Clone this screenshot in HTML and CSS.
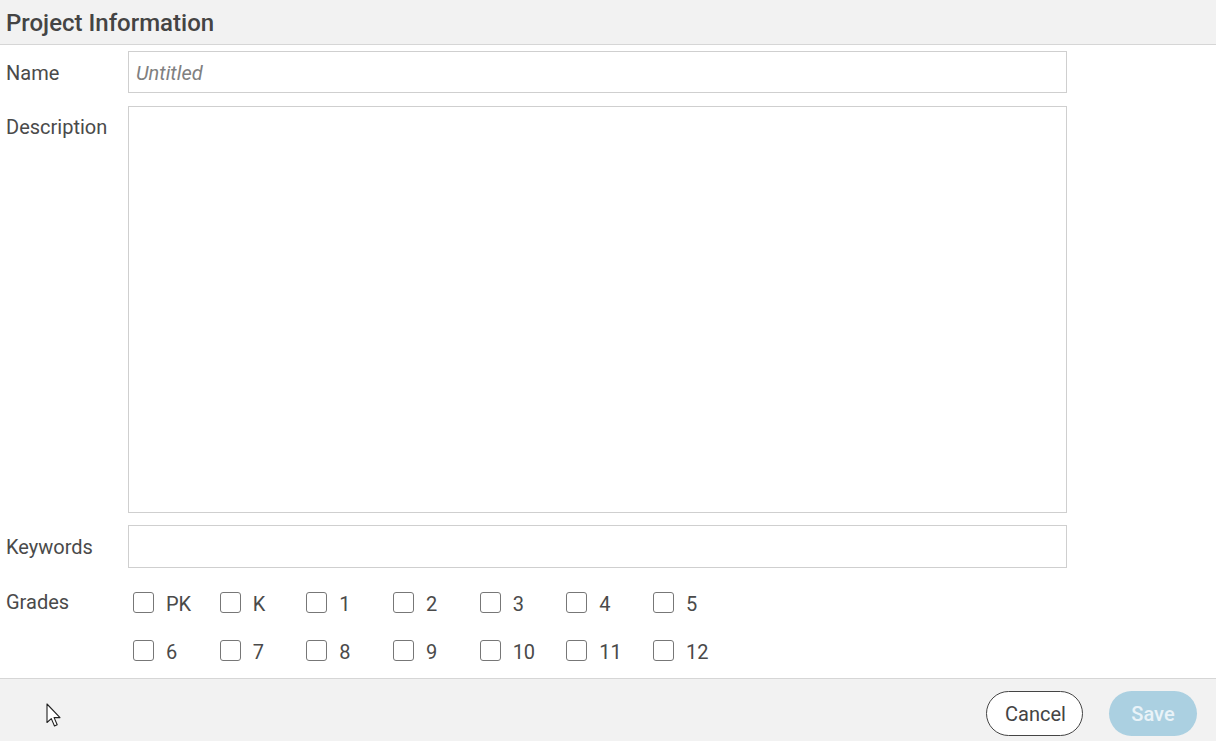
FILE: index.html
```html
<!DOCTYPE html>
<html>
<head>
<meta charset="utf-8">
<link rel="stylesheet" href="styles.css">
</head>
<body>
<div class="dialog">
  <div class="header"><h1 class="title">Project Information</h1></div>
  <div class="form">
    <div class="row row-name">
      <label class="label">Name</label>
      <input class="field" type="text" placeholder="Untitled">
    </div>
    <div class="row row-desc">
      <label class="label">Description</label>
      <textarea class="field area"></textarea>
    </div>
    <div class="row row-key">
      <label class="label">Keywords</label>
      <input class="field" type="text">
    </div>
    <div class="row row-grades">
      <label class="label label-grades">Grades</label>
      <div class="grades">
        <label class="grade"><input type="checkbox" class="cb"><span>PK</span></label>
        <label class="grade"><input type="checkbox" class="cb"><span>K</span></label>
        <label class="grade"><input type="checkbox" class="cb"><span>1</span></label>
        <label class="grade"><input type="checkbox" class="cb"><span>2</span></label>
        <label class="grade"><input type="checkbox" class="cb"><span>3</span></label>
        <label class="grade"><input type="checkbox" class="cb"><span>4</span></label>
        <label class="grade"><input type="checkbox" class="cb"><span>5</span></label>
        <label class="grade"><input type="checkbox" class="cb"><span>6</span></label>
        <label class="grade"><input type="checkbox" class="cb"><span>7</span></label>
        <label class="grade"><input type="checkbox" class="cb"><span>8</span></label>
        <label class="grade"><input type="checkbox" class="cb"><span>9</span></label>
        <label class="grade"><input type="checkbox" class="cb"><span>10</span></label>
        <label class="grade"><input type="checkbox" class="cb"><span>11</span></label>
        <label class="grade"><input type="checkbox" class="cb"><span>12</span></label>
      </div>
    </div>
  </div>
  <div class="footer">
    <button class="btn btn-cancel">Cancel</button>
    <button class="btn btn-save">Save</button>
  </div>
</div>
<svg class="cursor" width="17" height="26" viewBox="0 0 17 26">
  <path d="M1 1 L1 19.5 L5.3 15.6 L8.5 23 L11.2 21.8 L8.1 14.6 L14 14.6 Z" fill="#fff" stroke="#222" stroke-width="1.1" stroke-linejoin="round"/>
</svg>
</body>
</html>
```
FILE: styles.css
```css
* { box-sizing: border-box; }
html, body { margin: 0; padding: 0; }
body {
  font-family: Roboto, "Noto Sans", sans-serif;
  color: #4a4a4a;
  background: #fff;
  width: 1216px;
  height: 741px;
  overflow: hidden;
  position: relative;
}
.dialog {
  display: flex;
  flex-direction: column;
  height: 741px;
}
.header {
  height: 45px;
  background: #f2f2f2;
  border-bottom: 1px solid #d6d6d6;
  display: flex;
  align-items: center;
  padding-left: 6px;
}
.title {
  margin: 0;
  font-size: 24px;
  font-weight: 500;
  color: #444;
  line-height: 1;
  padding-top: 1px;
}
.form {
  flex: 1;
  padding-top: 6px;
}
.row {
  display: flex;
  align-items: flex-start;
}
.label {
  width: 128px;
  height: 42px;
  flex: none;
  padding-left: 6px;
  font-size: 20px;
  line-height: 44px;
  color: #4a4a4a;
}
.field {
  width: 939px;
  height: 42px;
  border: 1px solid #cfcfcf;
  border-radius: 0;
  font-family: Roboto, sans-serif;
  font-size: 20px;
  padding: 1px 7px 0;
  color: #4a4a4a;
  outline: none;
  margin: 0;
}
.field::placeholder {
  color: #808080;
  font-style: italic;
}
.row-desc { margin-top: 13px; }
.area {
  height: 407px;
  resize: none;
  display: block;
}
.row-desc .label { line-height: 42px; }
.row-key { margin-top: 12px; }
.row-key .field { height: 43px; }
.row-grades { margin-top: 12px; }
.label-grades { line-height: 44px; }
.grades {
  display: grid;
  grid-template-columns: repeat(7, 86.67px);
  row-gap: 4px;
  padding-left: 5px;
}
.grade {
  display: flex;
  align-items: center;
  height: 44px;
  font-size: 20px;
  color: #4a4a4a;
}
.grade span { margin-left: 12px; padding-top: 4px; }
.cb {
  appearance: none;
  -webkit-appearance: none;
  width: 21px;
  height: 21px;
  margin: 0;
  border: 1.5px solid #777;
  border-radius: 3px;
  background: #fff;
  flex: none;
}
.footer {
  height: 63px;
  background: #f2f2f2;
  border-top: 1px solid #d6d6d6;
  display: flex;
  justify-content: flex-end;
  align-items: flex-start;
  padding: 12px 19px 0 0;
  gap: 26px;
}
.btn {
  height: 45px;
  border-radius: 23px;
  font-family: Roboto, sans-serif;
  font-size: 20px;
  padding: 0 18px;
  margin: 0;
}
.btn-cancel {
  width: 97px;
  background: #fff;
  border: 1px solid #444;
  color: #444;
}
.btn-save {
  width: 88px;
  background: #abd0e1;
  border: none;
  color: #e9f3f8;
  font-weight: 500;
}
.cursor {
  position: absolute;
  left: 46px;
  top: 703px;
}
```
